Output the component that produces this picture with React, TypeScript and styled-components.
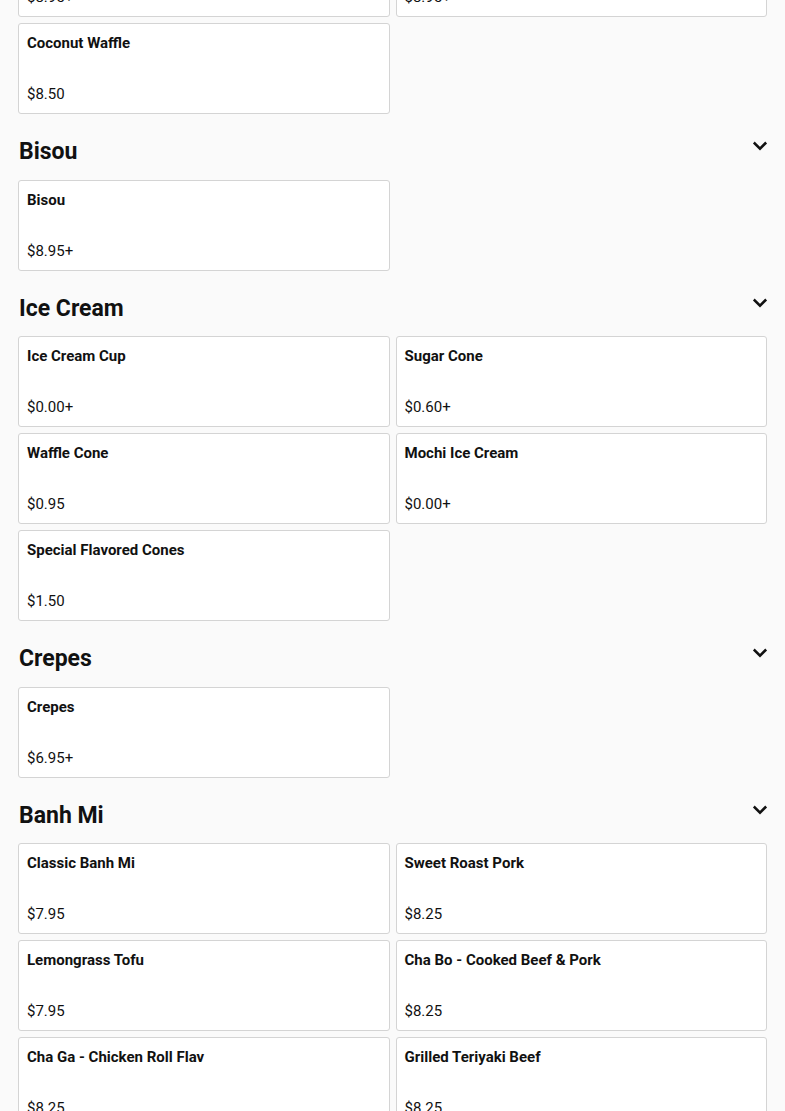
import styled, { createGlobalStyle } from 'styled-components';

type Item = { name: string; price: string };
type Section = { title?: string; items: Item[] };

const sections: Section[] = [
  {
    items: [
      { name: 'Ube Waffle', price: '$8.95+' },
      { name: 'Pandan Waffle', price: '$8.95+' },
      { name: 'Coconut Waffle', price: '$8.50' }
    ]
  },
  { title: 'Bisou', items: [{ name: 'Bisou', price: '$8.95+' }] },
  {
    title: 'Ice Cream',
    items: [
      { name: 'Ice Cream Cup', price: '$0.00+' },
      { name: 'Sugar Cone', price: '$0.60+' },
      { name: 'Waffle Cone', price: '$0.95' },
      { name: 'Mochi Ice Cream', price: '$0.00+' },
      { name: 'Special Flavored Cones', price: '$1.50' }
    ]
  },
  { title: 'Crepes', items: [{ name: 'Crepes', price: '$6.95+' }] },
  {
    title: 'Banh Mi',
    items: [
      { name: 'Classic Banh Mi', price: '$7.95' },
      { name: 'Sweet Roast Pork', price: '$8.25' },
      { name: 'Lemongrass Tofu', price: '$7.95' },
      { name: 'Cha Bo - Cooked Beef & Pork', price: '$8.25' },
      { name: 'Cha Ga - Chicken Roll Flav', price: '$8.25' },
      { name: 'Grilled Teriyaki Beef', price: '$8.25' }
    ]
  }
];

function App() {
  return (
    <>
      <GlobalStyle />
      <Page>
        {sections.map((section, i) => (
          <MenuSection key={i}>
            {section.title && (
              <SectionHeader>
                <SectionTitle>{section.title}</SectionTitle>
                <Chevron viewBox="0 0 24 24">
                  <path d="M5 8.5 L12 15.5 L19 8.5" />
                </Chevron>
              </SectionHeader>
            )}
            <ItemGrid>
              {section.items.map((item) => (
                <ItemCard key={item.name}>
                  <ItemName>{item.name}</ItemName>
                  <ItemPrice>{item.price}</ItemPrice>
                </ItemCard>
              ))}
            </ItemGrid>
          </MenuSection>
        ))}
      </Page>
    </>
  );
}

export default App;

const GlobalStyle = createGlobalStyle`
  body {
    margin: 0;
    background: #fafafa;
    font-family: Roboto, 'Liberation Sans', Arial, sans-serif;
    color: #111;
    overflow: hidden;
  }
`;

const Page = styled.div`
  padding: 0 18px;
  margin-top: -74px;
`;

const MenuSection = styled.section`
  & + & {
    margin-top: 20px;
  }
`;

const SectionHeader = styled.div`
  display: flex;
  align-items: center;
  justify-content: space-between;
  height: 36px;
  margin-bottom: 9.5px;
  padding-left: 1px;
`;

const SectionTitle = styled.h2`
  margin: 0;
  font-size: 23px;
  line-height: 36px;
  font-weight: 700;
  color: #111;
`;

const Chevron = styled.svg`
  width: 18px;
  height: 18px;
  margin-top: -12px;
  margin-right: -2px;
  fill: none;
  stroke: #111;
  stroke-width: 3.4;
  stroke-linecap: square;
`;

const ItemGrid = styled.div`
  display: grid;
  grid-template-columns: 1fr 1fr;
  gap: 6px;
`;

const ItemCard = styled.div`
  display: flex;
  flex-direction: column;
  justify-content: space-between;
  box-sizing: border-box;
  height: 91px;
  padding: 10px 8px;
  background: #fff;
  border: 1px solid #d4d4d4;
  border-radius: 3px;
`;

const ItemName = styled.div`
  font-size: 15px;
  line-height: 18px;
  font-weight: 700;
  color: #111;
`;

const ItemPrice = styled.div`
  font-size: 15px;
  line-height: 18px;
  color: #111;
`;
